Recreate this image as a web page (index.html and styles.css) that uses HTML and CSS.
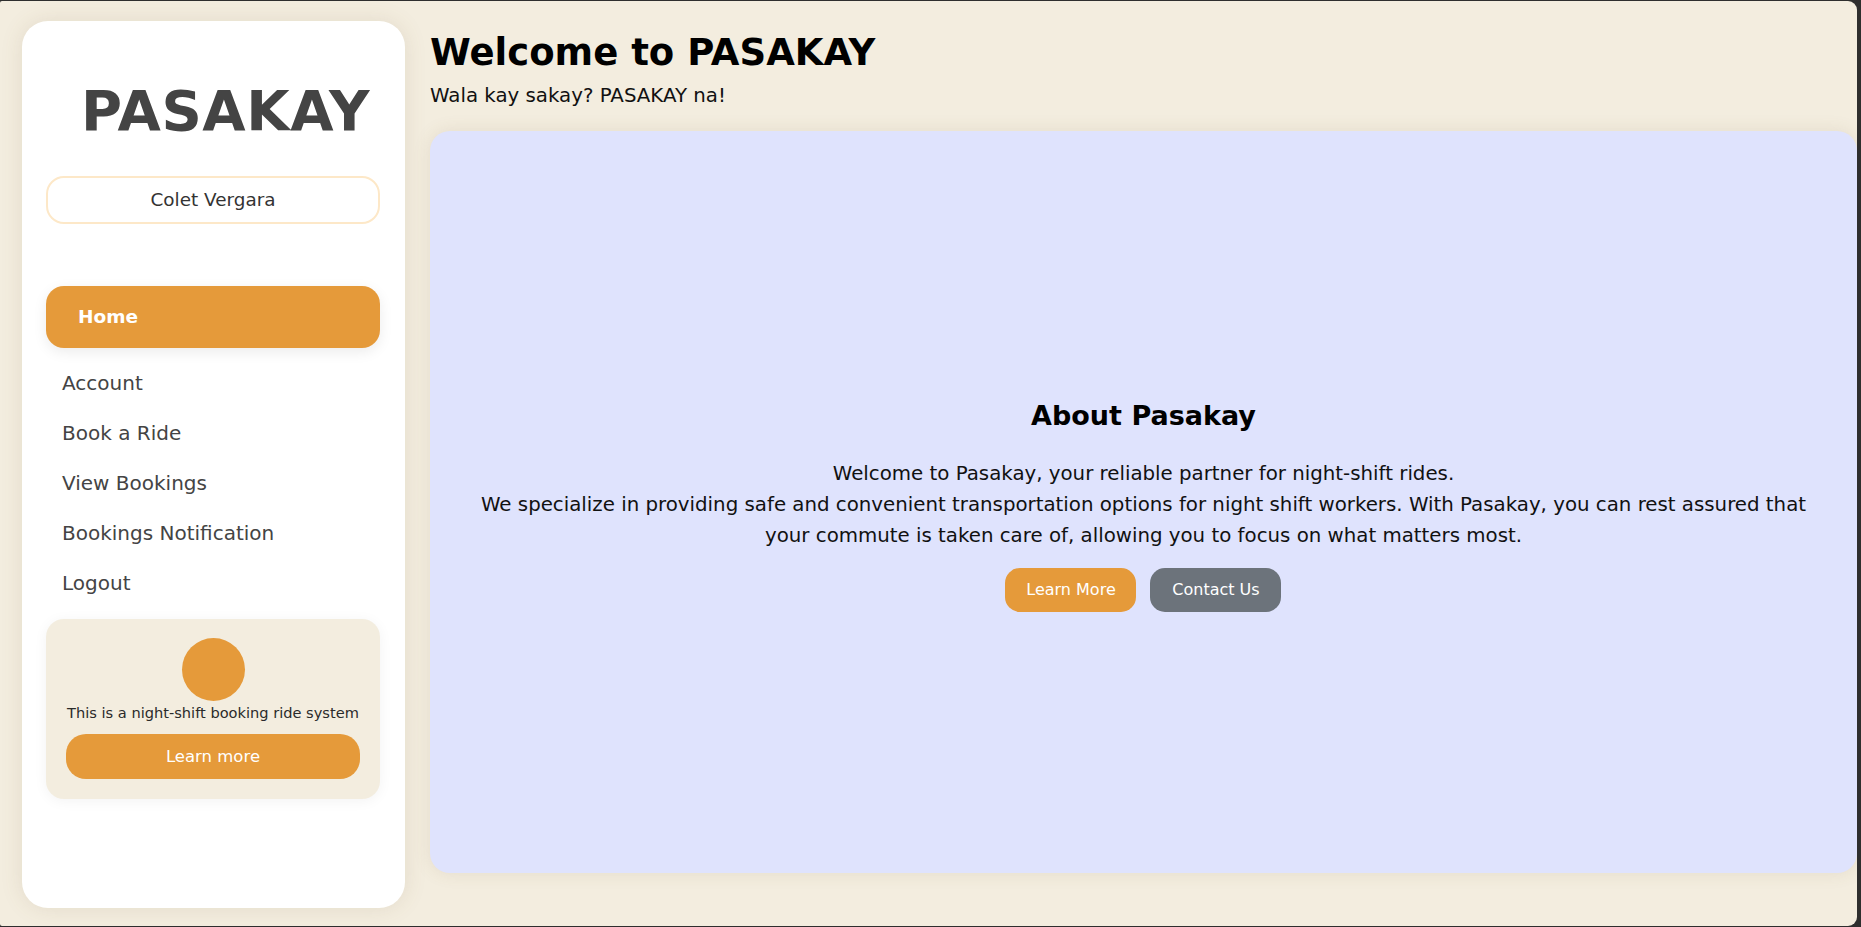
FILE: index.html
```html
<!DOCTYPE html>
<html lang="en">
<head>
<meta charset="utf-8">
<title>PASAKAY</title>
<link rel="stylesheet" href="styles.css">
</head>
<body>
<div class="app">
  <aside class="sidebar">
    <div class="logo">PASAKAY</div>
    <div class="user-box">Colet Vergara</div>
    <nav class="nav">
      <a class="nav-home" href="#">Home</a>
      <a class="nav-item" href="#">Account</a>
      <a class="nav-item" href="#">Book a Ride</a>
      <a class="nav-item" href="#">View Bookings</a>
      <a class="nav-item" href="#">Bookings Notification</a>
      <a class="nav-item" href="#">Logout</a>
    </nav>
    <div class="promo">
      <div class="promo-dot"></div>
      <p class="promo-text">This is a night-shift booking ride system</p>
      <button class="promo-btn">Learn more</button>
    </div>
  </aside>
  <main class="main">
    <h1 class="title">Welcome to PASAKAY</h1>
    <p class="subtitle">Wala kay sakay? PASAKAY na!</p>
    <section class="panel">
      <div class="about">
        <h2 class="about-title">About Pasakay</h2>
        <p class="about-text">Welcome to Pasakay, your reliable partner for night-shift rides.<br>We specialize in providing safe and convenient transportation options for night shift workers. With Pasakay, you can rest assured that<br>your commute is taken care of, allowing you to focus on what matters most.</p>
        <div class="about-actions">
          <button class="btn btn-orange">Learn More</button>
          <button class="btn btn-gray">Contact Us</button>
        </div>
      </div>
    </section>
  </main>
</div>
</body>
</html>
```
FILE: styles.css
```css
html {
  background: #2e2e2e;
}
body {
  margin: 0;
  font-family: "DejaVu Sans", "Noto Sans", sans-serif;
}
.app {
  box-sizing: border-box;
  width: calc(100% - 4px);
  height: 925px;
  margin-top: 1px;
  background: #f3eddf;
  border-radius: 2px 9px 9px 2px;
  overflow: hidden;
  display: flex;
  gap: 25px;
  padding: 20px 0 0 22px;
}
.sidebar {
  box-sizing: border-box;
  flex: 0 0 383px;
  height: 887px;
  background: #ffffff;
  border-radius: 26px;
  box-shadow: 0 0 22px rgba(120, 100, 60, 0.13);
  padding: 62px 25px 20px 24px;
  display: flex;
  flex-direction: column;
}
.logo {
  font-weight: bold;
  font-size: 56px;
  line-height: 55px;
  color: #444444;
  padding-left: 35px;
  margin-bottom: 38px;
  letter-spacing: 0.6px;
  white-space: nowrap;
}
.user-box {
  box-sizing: border-box;
  height: 48px;
  border: 2px solid #fde8c8;
  border-radius: 18px;
  text-align: center;
  line-height: 44px;
  font-size: 18.4px;
  color: #333333;
}
.nav {
  display: flex;
  flex-direction: column;
  margin-top: 62px;
}
.nav-home {
  display: block;
  height: 62px;
  line-height: 62px;
  background: #e59a3a;
  border-radius: 18px;
  padding-left: 32px;
  color: #ffffff;
  font-weight: bold;
  font-size: 18.5px;
  text-decoration: none;
  box-shadow: 0 4px 14px rgba(0, 0, 0, 0.08);
  margin-bottom: 10px;
}
.nav-item {
  display: block;
  height: 50px;
  line-height: 50px;
  padding-left: 16px;
  font-size: 20px;
  color: #444444;
  text-decoration: none;
}
.promo {
  margin-top: 11px;
  background: #f3eddf;
  border-radius: 18px;
  padding: 19px 20px 20px;
  display: flex;
  flex-direction: column;
  align-items: center;
  box-shadow: 0 2px 14px rgba(0, 0, 0, 0.05);
}
.promo-dot {
  width: 63px;
  height: 63px;
  border-radius: 50%;
  background: #e59a3a;
}
.promo-text {
  margin: 0;
  line-height: 24px;
  font-size: 14.6px;
  color: #2a2a2a;
  white-space: nowrap;
}
.promo-btn {
  margin-top: 9px;
  width: 100%;
  height: 45px;
  border: none;
  border-radius: 20px;
  background: #e59a3a;
  color: #ffffff;
  font-family: inherit;
  font-size: 16.5px;
}
.main {
  flex: 1;
  display: flex;
  flex-direction: column;
  min-width: 0;
}
.title {
  margin: 10px 0 0;
  font-size: 37px;
  line-height: 44px;
  font-weight: bold;
  color: #000000;
}
.subtitle {
  margin: 8px 0 0;
  font-size: 19.8px;
  line-height: 26px;
  color: #111111;
}
.panel {
  box-sizing: border-box;
  margin-top: 22px;
  height: 742px;
  background: #dfe3fd;
  border-radius: 20px;
  box-shadow: 0 0 18px rgba(120, 100, 60, 0.12);
  display: flex;
  align-items: center;
  justify-content: center;
  padding: 6px 20px 0;
}
.about {
  text-align: center;
}
.about-title {
  margin: 0;
  font-size: 27px;
  line-height: 34px;
  font-weight: bold;
  color: #000000;
}
.about-text {
  margin: 25px 0 0;
  font-size: 19.8px;
  line-height: 31px;
  color: #111111;
}
.about-actions {
  margin-top: 17px;
  display: flex;
  justify-content: center;
  gap: 14px;
}
.btn {
  height: 44px;
  width: 131px;
  border: none;
  border-radius: 15px;
  color: #ffffff;
  font-family: inherit;
  font-size: 16px;
}
.btn-orange {
  background: #e59a3a;
}
.btn-gray {
  background: #6c737b;
}
```
